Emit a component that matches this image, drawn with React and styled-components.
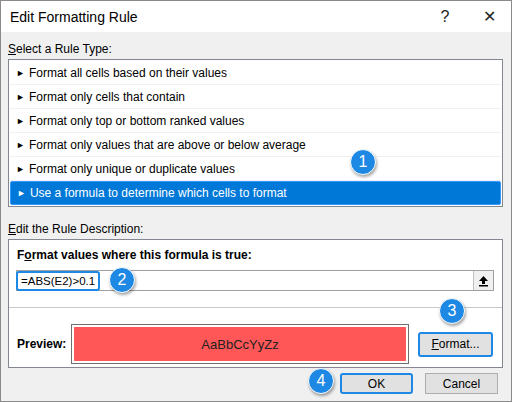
import React from "react";
import styled, { createGlobalStyle } from "styled-components";

const G = createGlobalStyle`
  html,body{margin:0;padding:0;}
  body{font-family:"Liberation Sans",Arial,sans-serif;font-size:12px;color:#000;}
`;
const Dialog = styled.div`
  position:relative;width:512px;height:402px;box-sizing:border-box;
  border:1px solid #8a8a8a;background:#f0f0f0;display:flex;flex-direction:column;
`;
const Title = styled.div`
  height:31px;flex:none;background:#fff;display:flex;align-items:center;padding-left:9px;font-size:14px;
`;
const TitleText = styled.div`flex:1;`;
const TBtn = styled.div`width:44px;text-align:center;font-size:16px;color:#222;`;
const Body = styled.div`padding:8px 8px 0 7px;display:flex;flex-direction:column;`;
const Label = styled.div`height:18px;line-height:18px;margin-bottom:1px;u{text-decoration:underline;}`;
const List = styled.div`
  background:#fff;border:1px solid #828790;padding:1px;height:148px;box-sizing:border-box;display:flex;flex-direction:column;
`;
const Row = styled.div`
  height:24px;flex:none;display:flex;align-items:center;padding-left:6px;gap:4px;box-sizing:border-box;
  border-bottom:1px solid ${p=>p.sel?"transparent":"#f0f0f0"};
  ${p=>p.sel&&`background:#0078d7;color:#fff;border:1px solid #3399ff;height:24px;border-radius:2px;`}
`;
const Arrow = styled.span`font-size:9px;`;
const Panel = styled.div`
  margin-top:0;background:#fff;border:1px solid #828790;height:129px;box-sizing:border-box;
  display:flex;flex-direction:column;
`;
const Bold = styled.div`font-weight:bold;padding:8px 0 0 8px;height:18px;u{text-decoration:underline;}`;
const InputRow = styled.div`
  margin:4px 8px 0 7px;height:21px;border:1px solid #a0a0a0;box-sizing:border-box;display:flex;align-items:center;
`;
const Formula = styled.div`
  width:84px;height:20px;box-sizing:border-box;border:2px solid #1e88e5;border-radius:3px;margin-left:-1px;
  display:flex;align-items:center;padding-left:3px;font-size:11.5px;
`;
const Spacer = styled.div`flex:1;`;
const Collapse = styled.div`
  width:19px;height:19px;background:#f0f0f0;border-left:1px solid #c0c0c0;display:flex;align-items:center;justify-content:center;
`;
const Sep = styled.div`height:1px;background:#c8c8c8;margin-top:16px;`;
const PreviewRow = styled.div`display:flex;align-items:center;padding:16px 9px 0 8px;`;
const PLabel = styled.div`font-weight:bold;width:54px;flex:none;`;
const PBox = styled.div`
  width:338px;height:40px;flex:none;box-sizing:border-box;border:1px solid #707070;padding:2px;background:#fff;
`;
const PFill = styled.div`
  background:#ff5757;height:100%;display:flex;align-items:center;justify-content:center;font-size:13px;color:#222;
`;
const Btn = styled.div`
  width:${p=>p.w}px;height:${p=>p.h||21}px;box-sizing:border-box;background:#e1e1e1;
  border:${p=>p.hl?"2px solid #1e88e5":"1px solid #adadad"};border-radius:${p=>p.hl?3:0}px;
  display:flex;align-items:center;justify-content:center;u{text-decoration:underline;}
`;
const Footer = styled.div`display:flex;justify-content:flex-end;gap:12px;padding:5px 5px 0 0;`;
const Badge = styled.div`
  position:absolute;left:${p=>p.x-13}px;top:${p=>p.y-13}px;width:26px;height:26px;border-radius:50%;
  background:#1e88e5;border:1.5px solid #fff;box-sizing:border-box;box-shadow:1px 2px 3px rgba(0,0,0,.35);
  color:#fff;font-size:16px;display:flex;align-items:center;justify-content:center;
`;

const rows=["Format all cells based on their values","Format only cells that contain","Format only top or bottom ranked values","Format only values that are above or below average","Format only unique or duplicate values"];

export default function App(){
  return <Dialog><G/>
    <Title><TitleText>Edit Formatting Rule</TitleText><TBtn>?</TBtn><TBtn>✕</TBtn></Title>
    <Body>
      <Label><u>S</u>elect a Rule Type:</Label>
      <List>
        {rows.map(r=><Row key={r}><Arrow>►</Arrow>{r}</Row>)}
        <Row sel><Arrow>►</Arrow>Use a formula to determine which cells to format</Row>
      </List>
      <Label style={{marginTop:13}}><u>E</u>dit the Rule Description:</Label>
      <Panel>
        <Bold>F<u>o</u>rmat values where this formula is true:</Bold>
        <InputRow><Formula>=ABS(E2)&gt;0.1</Formula><Spacer/>
          <Collapse><svg width="11" height="12" viewBox="0 0 11 12"><path d="M5.5 1L1 6h3v3h3V6h3z" fill="#000"/><rect x="1" y="10" width="9" height="1.5" fill="#000"/></svg></Collapse>
        </InputRow>
        <Sep/>
        <PreviewRow><PLabel>Preview:</PLabel><PBox><PFill>AaBbCcYyZz</PFill></PBox><Spacer/>
          <Btn w={75} h={25} hl><u>F</u>ormat...</Btn></PreviewRow>
      </Panel>
      <Footer><Btn w={73} hl>OK</Btn><Btn w={73}>Cancel</Btn></Footer>
    </Body>
    <Badge x={362} y={161}>1</Badge>
    <Badge x={121} y={279}>2</Badge>
    <Badge x={451} y={310}>3</Badge>
    <Badge x={320} y={380}>4</Badge>
  </Dialog>;
}
